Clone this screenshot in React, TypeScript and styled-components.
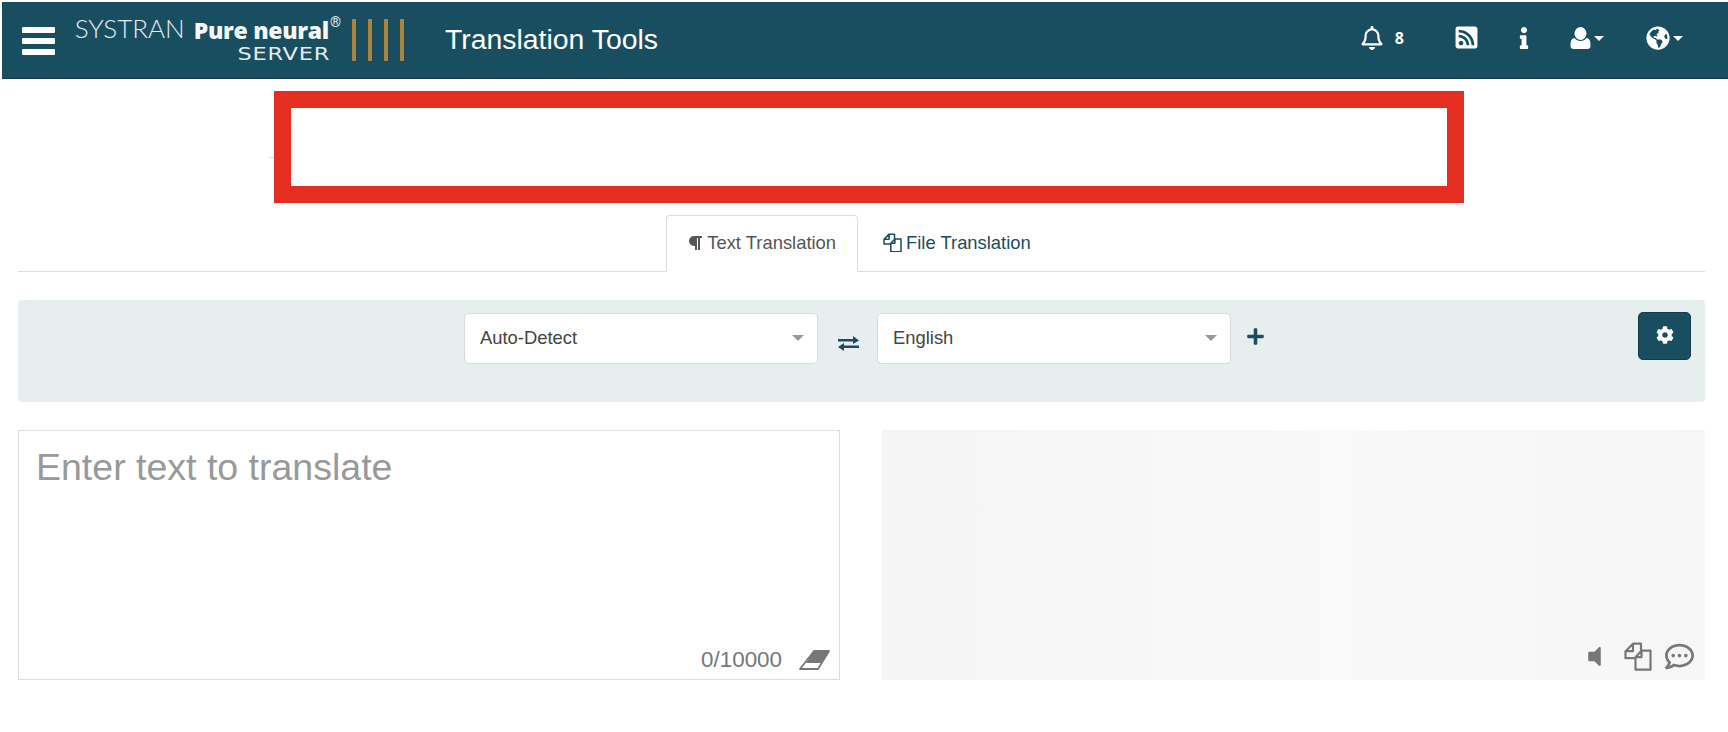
import React from "react";
import styled, { createGlobalStyle } from "styled-components";
import { FaRegBell, FaRssSquare, FaInfo, FaGlobeAmericas, FaCog, FaPlus, FaVolumeOff, FaRegCommentDots, FaParagraph } from "react-icons/fa";

const teal = "#194e60";

const Global = createGlobalStyle`
  html, body { margin: 0; padding: 0; background: #fff; height: 100%; }
  body { font-family: "Liberation Sans", Arial, sans-serif; color: #555; }
  * { box-sizing: border-box; }
`;

const Page = styled.div`
  width: 1728px;
  height: 732px;
  overflow: hidden;
  padding-top: 2px;
  display: flex;
  flex-direction: column;
`;

const Nav = styled.header`
  height: 77px;
  margin-left: 2px;
  background: ${teal};
  border-bottom: 1px solid #123c4a;
  display: flex;
  align-items: center;
  padding: 0 45px 0 20px;
  color: #fff;
`;

const Burger = styled.div`
  width: 33px;
  display: flex;
  flex-direction: column;
  gap: 5px;
  margin-top: 1px;
  span { display: block; height: 6px; border-radius: 1px; background: #fff; }
`;

const Logo = styled.div`
  margin-left: 19px;
  width: 267px;
  display: flex;
  flex-direction: column;
  align-items: flex-end;
  margin-top: -3px;
`;

const LogoTop = styled.div`
  display: flex;
  align-items: baseline;
  line-height: 30px;
  white-space: nowrap;
`;

const Systran = styled.span`
  font-family: Lato, sans-serif;
  font-weight: 300;
  font-size: 26px;
  color: #e3edf0;
  margin-right: 9px;
`;

const Pure = styled.span`
  font-family: "Open Sans", sans-serif;
  font-weight: 800;
  font-size: 23px;
  letter-spacing: -0.3px;
  color: #f4f8f9;
  position: relative;
  top: 1px;
`;

const Reg = styled.sup`
  font-family: Roboto, sans-serif;
  font-size: 14px;
  line-height: 0;
  margin-left: 1px;
  color: #e3edf0;
  position: relative;
  top: -11px;
`;

const Server = styled.div`
  font-family: "DejaVu Sans", sans-serif;
  font-size: 18px;
  line-height: 20px;
  text-transform: uppercase;
  letter-spacing: 0.6px;
  color: #e3edf0;
  margin-right: 11px;
  transform: scaleX(1.25);
  transform-origin: right center;
`;

const Bars = styled.div`
  margin-left: 11px;
  display: flex;
  gap: 12px;
  span { display: block; width: 4px; height: 42px; background: #a98540; }
`;

const Title = styled.div`
  margin-left: 41px;
  font-size: 28.4px;
  color: #fff;
  margin-top: -2px;
`;

const NavIcons = styled.div`
  margin-left: auto;
  display: flex;
  align-items: center;
  margin-top: -5px;
`;

const NavItem = styled.div<{ $gap?: number }>`
  display: flex;
  align-items: center;
  margin-left: ${(p) => p.$gap ?? 0}px;
  color: #fff;
`;

const Count = styled.span`
  font-family: "Open Sans", sans-serif;
  font-weight: 700;
  font-size: 16px;
  margin-left: 11px;
`;

const Caret = styled.i`
  display: block;
  margin-left: 3px;
  margin-top: 2px;
  border-left: 5px solid transparent;
  border-right: 5px solid transparent;
  border-top: 5px solid #fff;
`;

const Banner = styled.div`
  position: relative;
  width: 1190px;
  height: 112px;
  margin: 12px 0 0 274px;
  border: 17px solid #e52e22;
  &::before {
    content: "";
    position: absolute;
    left: -22px;
    top: 49px;
    width: 5px;
    height: 1px;
    background: #ddd;
  }
`;

const TabBar = styled.nav`
  margin: 12px 23px 0 18px;
  height: 57px;
  border-bottom: 1px solid #ddd;
  display: flex;
  justify-content: center;
`;

const Tab = styled.div<{ $active?: boolean }>`
  height: 57px;
  display: flex;
  align-items: center;
  gap: 4px;
  padding: ${(p) => (p.$active ? "0 21px 2px 20px" : "0 25px 2px 24px")};
  font-size: 18.4px;
  color: ${(p) => (p.$active ? "#555" : teal)};
  background: ${(p) => (p.$active ? "#fff" : "transparent")};
  border: 1px solid ${(p) => (p.$active ? "#ddd" : "transparent")};
  border-bottom-color: ${(p) => (p.$active ? "#fff" : "transparent")};
  border-radius: 4px 4px 0 0;
`;

const Toolbar = styled.section`
  margin: 28px 23px 0 18px;
  height: 102px;
  background: #e7eeee;
  border-radius: 4px;
  display: flex;
  align-items: flex-start;
  padding: 13px 14px 0 446px;
`;

const Select = styled.div`
  width: 354px;
  height: 51px;
  background: #fff;
  border: 1px solid #d6dcdc;
  border-radius: 5px;
  display: flex;
  align-items: center;
  justify-content: space-between;
  padding: 0 13px 2px 15px;
  font-size: 18.4px;
  color: #444;
`;

const SelectCaret = styled.i`
  display: block;
  border-left: 6px solid transparent;
  border-right: 6px solid transparent;
  border-top: 6px solid #999;
`;

const Swap = styled.div`
  width: 59px;
  height: 51px;
  display: flex;
  align-items: center;
  justify-content: center;
  padding: 9px 0 0 2px;
  color: ${teal};
`;

const AddLang = styled.div`
  margin: 14px 0 0 15px;
  color: ${teal};
  font-size: 19px;
  line-height: 19px;
`;

const Gear = styled.button`
  margin-left: auto;
  margin-top: -1px;
  width: 53px;
  height: 48px;
  background: ${teal};
  border: 1px solid #123c4a;
  border-radius: 5px;
  color: #fff;
  font-size: 18px;
  display: flex;
  align-items: center;
  justify-content: center;
  padding: 0 0 3px;
`;

const Editors = styled.main`
  margin: 28px 23px 0 18px;
  height: 250px;
  display: grid;
  grid-template-columns: 822px 823px;
  column-gap: 42px;
`;

const Source = styled.div`
  border: 1px solid #ddd;
  background: #fff;
  display: flex;
  flex-direction: column;
`;

const Input = styled.textarea`
  flex: 1;
  border: 0;
  outline: 0;
  resize: none;
  padding: 14px 17px;
  font-family: "Liberation Sans", Arial, sans-serif;
  font-size: 37.5px;
  line-height: 44px;
  &::placeholder { color: #999; opacity: 1; }
`;

const SourceFoot = styled.div`
  height: 36px;
  display: flex;
  align-items: center;
  justify-content: flex-end;
  gap: 17px;
  padding: 0 9px 3px 0;
  font-size: 22.4px;
  color: #777;
`;

const Target = styled.div`
  background: linear-gradient(90deg, #f5f5f5 0%, #f9f9f9 55%, #f6f6f6 100%);
  display: flex;
  align-items: flex-end;
  justify-content: flex-end;
  padding: 0 11px 10px 0;
  color: #777;
`;

const TargetIcon = styled.span<{ $gap?: number }>`
  display: flex;
  align-items: center;
  height: 27px;
  margin-left: ${(p) => p.$gap ?? 0}px;
`;

const Files = ({ size = 18 }: { size?: number }) => (
  <svg width={size} height={size * 1.05} viewBox="0 0 28 29" fill="none" stroke="currentColor" strokeWidth="2.2" strokeLinejoin="round">
    <path d="M9 1.5h8v7M11 16H1.5V9L9 1.5V9H1.5" />
    <path d="M17.5 8.500h9v19H11.500V15l6-6.500V15h-6" />
  </svg>
);

const UserIcon = () => (
  <svg width="21" height="22" viewBox="0 0 21 22" fill="currentColor">
    <ellipse cx="10.500" cy="6.500" rx="6" ry="6.500" />
    <path d="M4.500 11c1.500 2 3.500 3 6 3s4.500-1 6-3c2.500.3 4 2.500 4 6v2c0 2-1.200 3-3 3h-14c-1.800 0-3-1-3-3v-2c0-3.500 1.500-5.700 4-6z" />
  </svg>
);

const Eraser = () => (
  <svg width="31" height="20" viewBox="0 0 31 20">
    <path d="M15 1H30L19 19H1z" fill="#fff" stroke="#777" strokeWidth="1.8" strokeLinejoin="round" />
    <path d="M15 1H30L22 13H7z" fill="#777" />
  </svg>
);

const Exchange = () => (
  <svg width="21" height="15" viewBox="0 0 21 15" fill="currentColor">
    <path d="M0 3h15V0l6 4.500L15 8V5.500H0z" />
    <path d="M21 9.500H6V7L0 11l6 4v-3h15z" />
  </svg>
);

export default function App() {
  return (
    <>
      <Global />
      <Page>
        <Nav>
          <Burger><span /><span /><span /></Burger>
          <Logo>
            <LogoTop>
              <Systran>SYSTRAN</Systran>
              <Pure>Pure neural</Pure>
              <Reg>®</Reg>
            </LogoTop>
            <Server>Server</Server>
          </Logo>
          <Bars><span /><span /><span /><span /></Bars>
          <Title>Translation Tools</Title>
          <NavIcons>
            <NavItem><FaRegBell size={24} /><Count>8</Count></NavItem>
            <NavItem $gap={50}><FaRssSquare size={25} /></NavItem>
            <NavItem $gap={34}><FaInfo size={22} /></NavItem>
            <NavItem $gap={35}><UserIcon /><Caret /></NavItem>
            <NavItem $gap={42}><FaGlobeAmericas size={24} /><Caret /></NavItem>
          </NavIcons>
        </Nav>
        <Banner />
        <TabBar>
          <Tab $active><FaParagraph size={16} />Text Translation</Tab>
          <Tab><Files size={19} />File Translation</Tab>
        </TabBar>
        <Toolbar>
          <Select>Auto-Detect<SelectCaret /></Select>
          <Swap><Exchange /></Swap>
          <Select>English<SelectCaret /></Select>
          <AddLang><FaPlus /></AddLang>
          <Gear aria-label="Settings"><FaCog /></Gear>
        </Toolbar>
        <Editors>
          <Source>
            <Input placeholder="Enter text to translate" />
            <SourceFoot>0/10000<Eraser /></SourceFoot>
          </Source>
          <Target>
            <TargetIcon><FaVolumeOff size={25} /></TargetIcon>
            <TargetIcon $gap={17}><Files size={28} /></TargetIcon>
            <TargetIcon $gap={13}><FaRegCommentDots size={29} /></TargetIcon>
          </Target>
        </Editors>
      </Page>
    </>
  );
}
